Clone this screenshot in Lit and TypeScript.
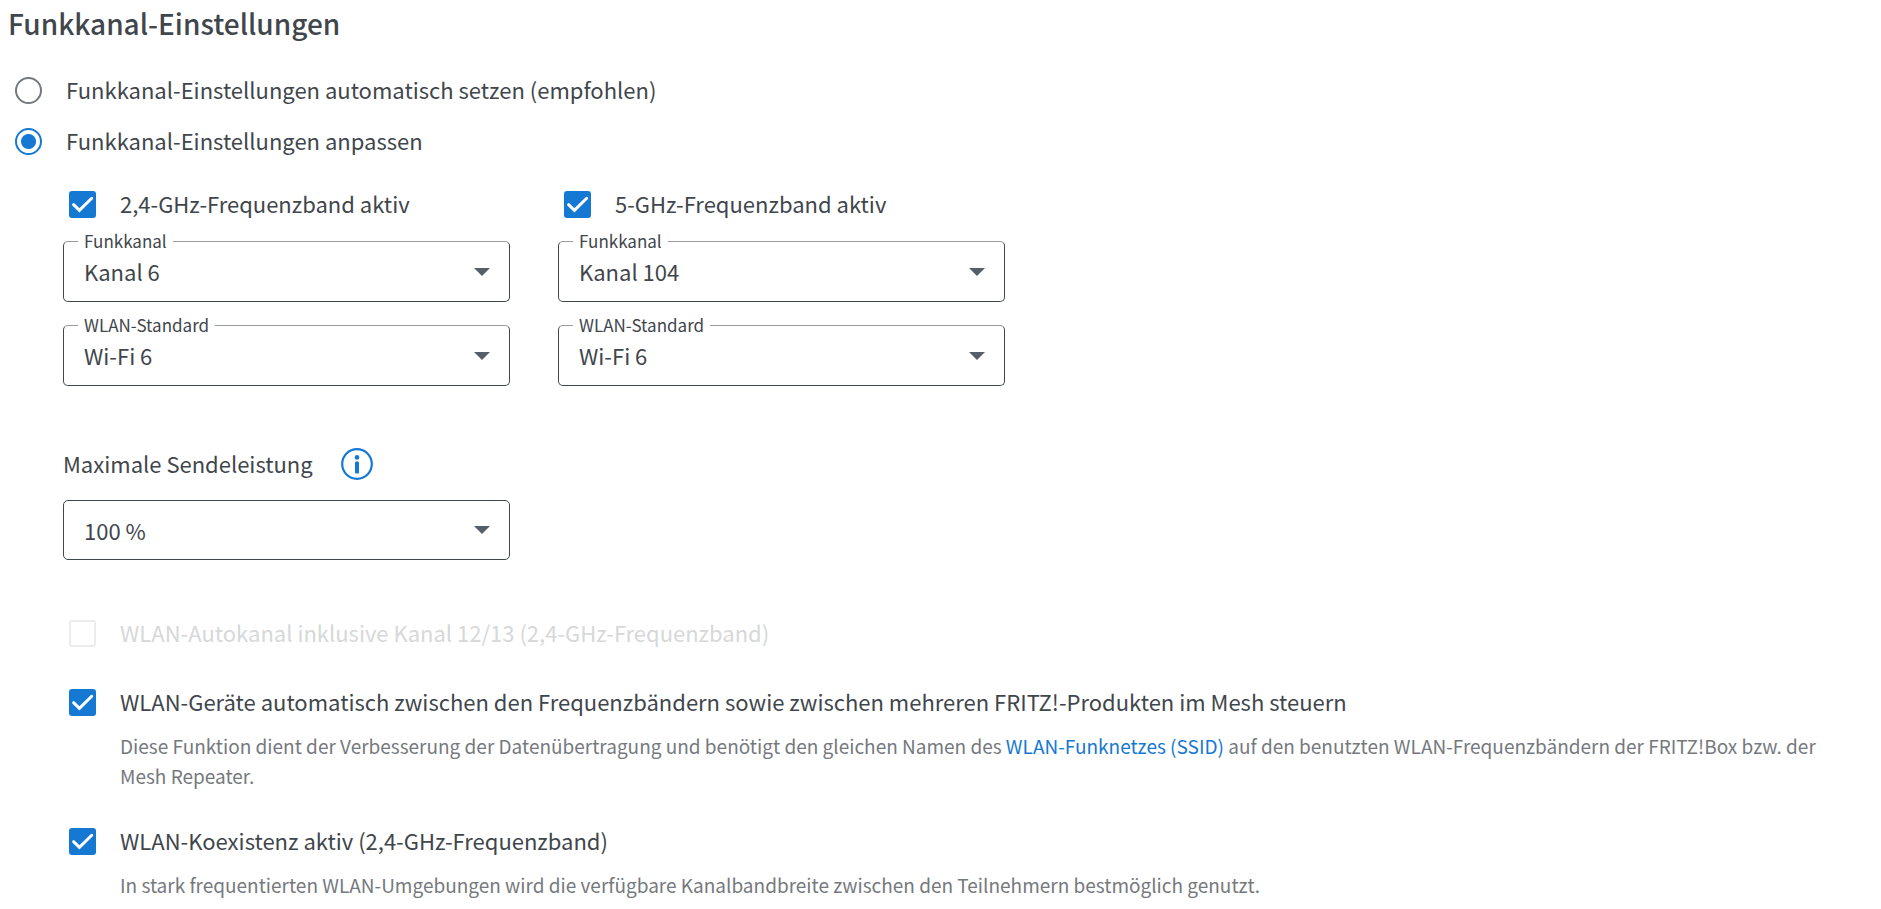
import { LitElement, html, css, svg, nothing } from "lit";
import { customElement, state } from "lit/decorators.js";

interface Field {
  id: string;
  label: string;
  value: string;
  options: string[];
}

interface Band {
  id: string;
  label: string;
  fields: Field[];
}

const CHANNELS_24 = ["Autokanal", "Kanal 1", "Kanal 6", "Kanal 11"];
const CHANNELS_5 = ["Autokanal", "Kanal 36", "Kanal 52", "Kanal 104"];
const STANDARDS = ["Wi-Fi 4", "Wi-Fi 5", "Wi-Fi 6"];

const BANDS: Band[] = [
  {
    id: "band24",
    label: "2,4-GHz-Frequenzband aktiv",
    fields: [
      { id: "channel24", label: "Funkkanal", value: "Kanal 6", options: CHANNELS_24 },
      { id: "standard24", label: "WLAN-Standard", value: "Wi-Fi 6", options: STANDARDS },
    ],
  },
  {
    id: "band5",
    label: "5-GHz-Frequenzband aktiv",
    fields: [
      { id: "channel5", label: "Funkkanal", value: "Kanal 104", options: CHANNELS_5 },
      { id: "standard5", label: "WLAN-Standard", value: "Wi-Fi 6", options: STANDARDS },
    ],
  },
];

@customElement("app-root")
export class AppRoot extends LitElement {
  @state() private mode = "manual";

  static styles = css`
    :host {
      display: block;
      font-family: "Noto Sans CJK JP", "Noto Sans", sans-serif;
      font-size: 22px;
      line-height: 32px;
      color: #3f464c;
      background: #ffffff;
    }
    * {
      box-sizing: border-box;
    }
    .page {
      padding: 6px 8px 8px;
    }
    .title {
      margin: 0 0 34px;
      font-size: 28px;
      line-height: 34px;
      font-weight: 500;
    }
    .modes {
      display: flex;
      flex-direction: column;
      gap: 19px;
      margin: 0;
      padding: 0 0 0 7px;
      border: 0;
    }
    .option {
      display: flex;
      align-items: center;
      height: 32px;
      gap: 24px;
    }
    .text {
      padding-bottom: 2px;
    }
    .radio {
      appearance: none;
      flex: none;
      width: 27px;
      height: 27px;
      margin: 0;
      border: 2px solid #75797e;
      border-radius: 50%;
      background: #ffffff;
    }
    .radio:checked {
      border-color: #1578d3;
      background: radial-gradient(circle, #1578d3 7px, #ffffff 8px);
    }
    .details {
      padding: 31px 16px 0 55px;
    }
    .bands {
      display: grid;
      grid-template-columns: 1fr 1fr;
      gap: 48px;
      max-width: 942px;
    }
    .band {
      display: flex;
      flex-direction: column;
      gap: 23px;
    }
    .band .option {
      margin-bottom: -2px;
    }
    .check {
      padding-left: 6px;
    }
    .tick {
      display: grid;
      flex: none;
      width: 27px;
      height: 27px;
    }
    .box {
      grid-area: 1 / 1;
      appearance: none;
      width: 27px;
      height: 27px;
      margin: 0;
      border: 2px solid #75797e;
      border-radius: 3px;
      background: #ffffff;
    }
    .box:checked {
      border-color: #1578d3;
      background: #1578d3;
    }
    .mark {
      grid-area: 1 / 1;
      pointer-events: none;
    }
    .disabled {
      color: #d6d8d9;
    }
    .disabled .box {
      border-color: #ececec;
    }
    .field {
      position: relative;
      display: grid;
      align-items: center;
    }
    .select {
      grid-area: 1 / 1;
      appearance: none;
      width: 100%;
      height: 60px;
      padding: 0 56px 1px 20px;
      border: 1px solid #3f464c;
      border-radius: 5px;
      background: #ffffff;
      color: inherit;
      font: inherit;
    }
    .labelled .select {
      height: 61px;
      border-top-color: #999b9d;
    }
    .caret {
      grid-area: 1 / 1;
      justify-self: end;
      margin-right: 20px;
      pointer-events: none;
    }
    .caption {
      position: absolute;
      top: -12px;
      left: 15px;
      padding: 0 6px;
      background: #ffffff;
      font-size: 17px;
      line-height: 24px;
    }
    .power {
      margin-top: 61px;
      max-width: 447px;
    }
    .powerhead {
      display: flex;
      align-items: center;
      gap: 28px;
      margin-bottom: 19px;
    }
    .info {
      display: block;
      width: 32px;
      height: 32px;
      padding: 0;
      border: 0;
      background: none;
    }
    .extras {
      display: flex;
      flex-direction: column;
      padding-top: 57px;
      gap: 37px;
    }
    .hint {
      margin: 13px 0 -3px 57px;
      font-size: 19px;
      line-height: 30px;
      color: #75797e;
    }
    .link {
      color: #1578d3;
      text-decoration: none;
    }
  `;

  private radio(value: string, label: string) {
    return html`<label class="option">
      <input
        class="radio"
        type="radio"
        name="mode"
        value=${value}
        .checked=${this.mode === value}
        @change=${() => (this.mode = value)}
      />
      <span class="text">${label}</span>
    </label>`;
  }

  private checkbox(id: string, label: string, checked: boolean, disabled = false) {
    return html`<label class="option check ${disabled ? "disabled" : ""}" for=${id}>
      <span class="tick">
        <input class="box" type="checkbox" id=${id} ?checked=${checked} ?disabled=${disabled} />
        <svg class="mark" width="27" height="27" viewBox="0 0 27 27" aria-hidden="true">
          ${svg`<path d="M4.6 13.7 10.4 19.3 22.7 7.3" fill="none" stroke="#ffffff" stroke-width="3" stroke-linecap="round" />`}
        </svg>
      </span>
      <span class="text">${label}</span>
    </label>`;
  }

  private select(field: Field, captioned: boolean) {
    return html`<div class="field ${captioned ? "labelled" : ""}">
      <select class="select" id=${field.id}>
        ${field.options.map(
          (o) => html`<option ?selected=${o === field.value}>${o}</option>`
        )}
      </select>
      ${captioned
        ? html`<label class="caption" for=${field.id}>${field.label}</label>`
        : nothing}
      <svg class="caret" width="16" height="8" viewBox="0 0 16 8" aria-hidden="true">
        <path d="M0 0H16L8 8Z" fill="#565f69" />
      </svg>
    </div>`;
  }

  render() {
    return html`<main class="page">
      <h1 class="title">Funkkanal-Einstellungen</h1>
      <fieldset class="modes" aria-label="Funkkanal-Einstellungen">
        ${this.radio("auto", "Funkkanal-Einstellungen automatisch setzen (empfohlen)")}
        ${this.radio("manual", "Funkkanal-Einstellungen anpassen")}
      </fieldset>
      <div class="details">
        <div class="bands">
          ${BANDS.map(
            (band) => html`<section class="band">
              ${this.checkbox(band.id, band.label, true)}
              ${band.fields.map((f) => this.select(f, true))}
            </section>`
          )}
        </div>
        <section class="power">
          <div class="powerhead">
            <label class="text" for="power">Maximale Sendeleistung</label>
            <button class="info" type="button" aria-label="Info">
              <svg width="32" height="32" viewBox="0 0 32 32" aria-hidden="true">
                <circle cx="16" cy="16" r="14.8" fill="none" stroke="#1578d3" stroke-width="2.2" />
                <circle cx="16" cy="9.4" r="2.3" fill="#1578d3" />
                <rect x="14" y="13.6" width="4" height="12" rx="1" fill="#1578d3" />
              </svg>
            </button>
          </div>
          ${this.select(
            {
              id: "power",
              label: "Maximale Sendeleistung",
              value: "100 %",
              options: ["100 %", "50 %", "25 %", "12 %", "6 %"],
            },
            false
          )}
        </section>
        <section class="extras">
          ${this.checkbox("auto1213", "WLAN-Autokanal inklusive Kanal 12/13 (2,4-GHz-Frequenzband)", false, true)}
          <div>
            ${this.checkbox(
              "steering",
              "WLAN-Geräte automatisch zwischen den Frequenzbändern sowie zwischen mehreren FRITZ!-Produkten im Mesh steuern",
              true
            )}
            <p class="hint">
              Diese Funktion dient der Verbesserung der Datenübertragung und benötigt den gleichen Namen des
              <a class="link" href="#ssid">WLAN-Funknetzes (SSID)</a> auf den benutzten WLAN-Frequenzbändern der
              FRITZ!Box bzw. der Mesh Repeater.
            </p>
          </div>
          <div>
            ${this.checkbox("coexistence", "WLAN-Koexistenz aktiv (2,4-GHz-Frequenzband)", true)}
            <p class="hint">
              In stark frequentierten WLAN-Umgebungen wird die verfügbare Kanalbandbreite zwischen den Teilnehmern
              bestmöglich genutzt.
            </p>
          </div>
        </section>
      </div>
    </main>`;
  }
}
